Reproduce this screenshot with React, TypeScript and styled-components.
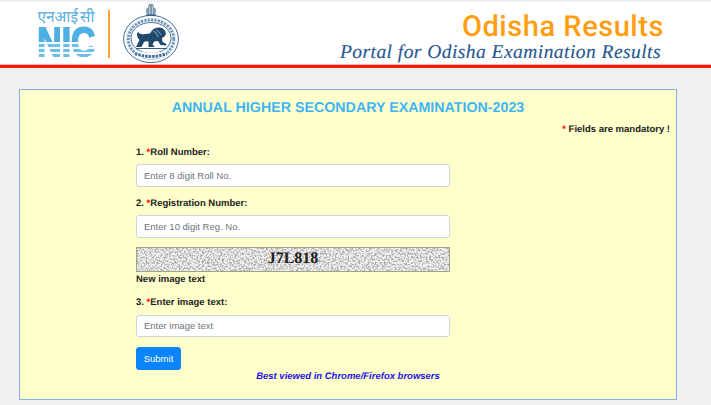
import styled, { createGlobalStyle } from "styled-components";

const GlobalStyle = createGlobalStyle`
  html, body {
    margin: 0;
    padding: 0;
    background: #f0f0f0;
    font-family: "Liberation Sans", Arial, sans-serif;
    text-rendering: geometricPrecision;
  }
`;

const Emblem = () => (
  <EmblemSvg viewBox="0 0 56 60" aria-hidden="true">
    {/* capital on top */}
    <path
      d="M23 8 Q23 5 25 5 Q25 1 27 1 Q28 0 29 1 Q31 1 31 5 Q33 5 33 8 L32 12 L24 12 Z"
      fill="#7f98ad"
    />
    <path d="M26.5 3 V11 M29.5 3 V11" stroke="#e6ecf1" strokeWidth="0.6" />
    <rect x="23" y="11.5" width="10" height="1.6" fill="#3c6183" />
    {/* rings */}
    <ellipse cx="28" cy="36" rx="27.4" ry="23.6" fill="#fff" stroke="#2c5b8c" strokeWidth="0.9" />
    <ellipse cx="28" cy="36" rx="25.2" ry="21.6" fill="#e4ecf3" />
    <ellipse
      cx="28"
      cy="36"
      rx="22.8"
      ry="19.2"
      fill="none"
      stroke="#3f6d98"
      strokeOpacity="0.75"
      strokeWidth="2.6"
      strokeDasharray="2 1.4"
    />
    <ellipse cx="28" cy="35" rx="20" ry="15.5" fill="#fff" stroke="#2c5b8c" strokeWidth="0.8" />
    {/* lion */}
    <path
      d="M13 44 L16.5 37 Q12.5 33 15 28.5 Q16.5 32 22 31 Q25 30.5 27 30.5 Q30 24 36.5 24.5 Q42 25 43 31 L41.5 33.5 L39 35 L39.5 39 L43.5 41 L43 42.5 L37.5 42 L35 38 L31 38.5 L29.5 42 L31.5 43 L31 44 L25.5 44 L25.5 38.5 Q22.5 38 21 39 L18.5 44 Z"
      fill="#1f4a6e"
    />
    <path d="M30 28 Q34 29 35 34 M33 27 Q37 29 38 32" stroke="#b9c9d6" strokeWidth="0.7" fill="none" />
    <path d="M13 45.5 H44" stroke="#1f4a6e" strokeWidth="0.9" />
    {/* motto band */}
    <path d="M12 47 Q28 53 44 47 L45 53 Q28 59 11 53 Z" fill="#fff" />
    <path
      d="M12 50.5 Q28 56.5 44 50.5"
      stroke="#3f6d98"
      strokeWidth="3"
      strokeDasharray="2.5 1"
      fill="none"
    />
  </EmblemSvg>
);

const NoiseImage = () => (
  <NoiseSvg aria-hidden="true">
    <filter id="captcha-noise">
      <feTurbulence type="fractalNoise" baseFrequency="0.55" numOctaves="3" seed="7" />
      <feColorMatrix
        values="0 0 0 0 0.38
                0 0 0 0 0.38
                0 0 0 0 0.38
                3.4 0 0 0 -1.4"
      />
    </filter>
    <rect width="100%" height="100%" fill="#f2f2f2" />
    <rect width="100%" height="100%" filter="url(#captcha-noise)" />
  </NoiseSvg>
);

const App = () => {
  return (
    <>
      <GlobalStyle />
      <Page>
        <Header>
          <LogoGroup>
            <NicLogo>
              <NicHindi>एनआई सी</NicHindi>
              <NicWord>NIC</NicWord>
            </NicLogo>
            <LogoDivider />
            <Emblem />
          </LogoGroup>
          <HeaderTitles>
            <SiteName>Odisha Results</SiteName>
            <SiteTagline>Portal for Odisha Examination Results</SiteTagline>
          </HeaderTitles>
        </Header>
        <RedLine />

        <Card>
          <Title>ANNUAL HIGHER SECONDARY EXAMINATION-2023</Title>
          <Mandatory>
            <Star>*</Star> Fields are mandatory !
          </Mandatory>

          <Form>
            <FieldLabel>
              1. <Star>*</Star>Roll Number:
            </FieldLabel>
            <TextInput placeholder="Enter 8 digit Roll No." />

            <FieldLabel>
              2. <Star>*</Star>Registration Number:
            </FieldLabel>
            <TextInput placeholder="Enter 10 digit Reg. No." />

            <Captcha>
              <NoiseImage />
              <CaptchaText>J7L818</CaptchaText>
            </Captcha>
            <NewImage>New image text</NewImage>

            <FieldLabel>
              3. <Star>*</Star>Enter image text:
            </FieldLabel>
            <TextInput placeholder="Enter image text" />

            <SubmitButton type="button">Submit</SubmitButton>
          </Form>

          <BrowserNote>Best viewed in Chrome/Firefox browsers</BrowserNote>
        </Card>
      </Page>
    </>
  );
};

export default App;

const Page = styled.div`
  width: 711px;
  height: 405px;
  overflow: hidden;
  padding-top: 2px;
  box-sizing: border-box;
  background: #f0f0f0;
`;

const Header = styled.div`
  height: 63px;
  background: #fff;
  display: flex;
  justify-content: space-between;
  align-items: flex-start;
  padding: 0 47px 0 37px;
`;

const LogoGroup = styled.div`
  display: flex;
  align-items: flex-start;
`;

const NicLogo = styled.div`
  width: 58px;
  padding-top: 4px;
  display: flex;
  flex-direction: column;
  align-items: center;
`;

const NicHindi = styled.div`
  font-family: "Noto Sans", "DejaVu Sans", sans-serif;
  font-size: 15.5px;
  line-height: 21px;
  word-spacing: -2px;
  color: #5aaede;
  white-space: nowrap;
`;

const NicWord = styled.div`
  position: relative;
  font-family: "Liberation Sans", Arial, sans-serif;
  font-weight: 700;
  font-size: 41px;
  line-height: 31px;
  height: 31px;
  transform: scaleX(0.82);
  color: #4fb0e4;
  -webkit-text-stroke: 1.8px #4fb0e4;

  /* white bands over the lower half of the letters */
  &::after {
    content: "";
    position: absolute;
    left: -3px;
    right: -3px;
    top: 15px;
    bottom: 0;
    background: repeating-linear-gradient(
      rgba(255, 255, 255, 0.95) 0,
      rgba(255, 255, 255, 0.95) 2px,
      rgba(255, 255, 255, 0.18) 2px,
      rgba(255, 255, 255, 0.18) 5px
    );
  }
`;

const LogoDivider = styled.div`
  width: 2px;
  height: 48px;
  margin: 8px 13px 0 13px;
  background: #f9a33c;
`;

const EmblemSvg = styled.svg`
  width: 56px;
  height: 60px;
  margin-top: 1px;
`;

const HeaderTitles = styled.div`
  display: flex;
  flex-direction: column;
  align-items: flex-end;
`;

const SiteName = styled.div`
  font-family: Roboto, sans-serif;
  font-weight: 500;
  font-size: 29px;
  line-height: 34px;
  margin-top: 8px;
  letter-spacing: 0.55px;
  color: #ff9e12;
`;

const SiteTagline = styled.div`
  font-family: "Liberation Serif", "Times New Roman", serif;
  font-style: italic;
  font-size: 19.5px;
  line-height: 20px;
  margin: -1px 3px 0 0;
  letter-spacing: 0.45px;
  -webkit-text-stroke: 0.15px #27588f;
  white-space: nowrap;
  color: #27588f;
`;

const RedLine = styled.div`
  height: 3px;
  background: #fb1a0c;
  box-shadow: 0 -1px 0 #f8b9b4;
`;

const Card = styled.div`
  width: 658px;
  height: 311px;
  margin: 21px 0 0 19px;
  box-sizing: border-box;
  background: #ffffcc;
  border: 1px solid #86b1e4;
  display: flex;
  flex-direction: column;
`;

const Title = styled.div`
  margin-top: 9px;
  text-align: center;
  font-size: 14.25px;
  line-height: 19px;
  font-weight: 700;
  color: #3fb4f4;
`;

const Mandatory = styled.div`
  margin-top: 5px;
  padding-right: 6px;
  text-align: right;
  font-size: 9.5px;
  line-height: 14px;
  font-weight: 700;
  color: #222;
`;

const Star = styled.span`
  color: #f00;
`;

const Form = styled.div`
  width: 314px;
  margin: 8.5px 0 0 116px;
  display: flex;
  flex-direction: column;
  align-items: flex-start;
`;

const FieldLabel = styled.div`
  font-size: 9.5px;
  line-height: 14px;
  font-weight: 700;
  color: #222;
  margin-bottom: 4.5px;
`;

const TextInput = styled.input`
  width: 100%;
  height: 22.5px;
  box-sizing: border-box;
  padding: 0 7px;
  margin-bottom: 10px;
  background: #fff;
  border: 1px solid #ced4da;
  border-radius: 3px;
  font-family: "Liberation Sans", Arial, sans-serif;
  font-size: 9.5px;
  outline: none;

  &::placeholder {
    color: #6c757d;
    opacity: 1;
  }
`;

const Captcha = styled.div`
  position: relative;
  width: 100%;
  height: 25px;
  margin-top: -1px;
  box-sizing: border-box;
  border: 1px solid #a3a38c;
  display: flex;
  align-items: center;
  justify-content: center;
`;

const NoiseSvg = styled.svg`
  position: absolute;
  inset: 0;
  width: 100%;
  height: 100%;
`;

const CaptchaText = styled.span`
  position: relative;
  font-family: "Liberation Serif", "Times New Roman", serif;
  font-size: 16px;
  font-weight: 700;
  color: #222;
`;

const NewImage = styled.div`
  margin: 1px 0 9.5px;
  font-size: 9.5px;
  line-height: 14px;
  font-weight: 700;
  color: #222;
`;

const SubmitButton = styled.button`
  width: 45px;
  height: 23px;
  margin-top: -0.5px;
  padding: 0;
  background: #0a84f8;
  color: #fff;
  border: 1px solid #0a84f8;
  border-radius: 3px;
  font-family: "Liberation Sans", Arial, sans-serif;
  font-size: 9.5px;
`;

const BrowserNote = styled.div`
  text-align: center;
  font-size: 9.5px;
  line-height: 14px;
  font-weight: 700;
  font-style: italic;
  color: #1a12e8;
`;
